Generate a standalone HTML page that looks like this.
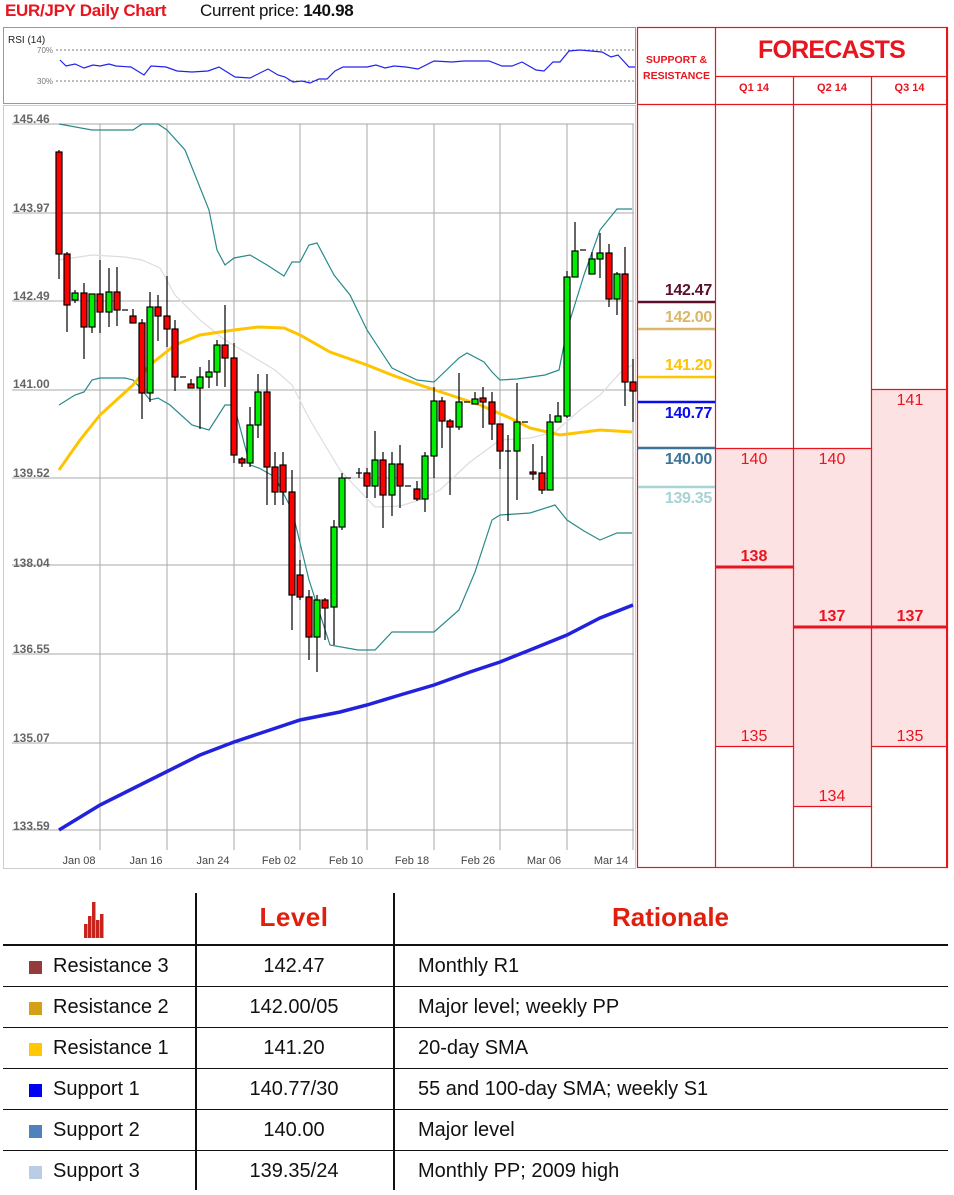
<!DOCTYPE html>
<html><head><meta charset="utf-8"><style>
*{margin:0;padding:0;box-sizing:border-box}
body{width:954px;height:1195px;background:#fff;position:relative;overflow:hidden;font-family:"Liberation Sans",sans-serif}
.a{position:absolute}
.hd{font-size:17px}
.sr{position:absolute;right:242px;font-size:16px;font-weight:bold;text-align:right;letter-spacing:-0.3px}
.fc{position:absolute;font-size:16px;color:#e8141e;text-align:center;width:78px}
.row{position:absolute;left:3px;width:945px;height:41px;border-bottom:1.5px solid #111;font-size:20px;color:#111}
.row span{position:absolute;top:9px}
.sw{position:absolute;left:26px;top:15px;width:13px;height:13px}
</style></head><body>
<div class="a hd" style="left:5px;top:1px;color:#e8141e;font-weight:bold;letter-spacing:-0.3px">EUR/JPY Daily Chart</div>
<div class="a hd" style="left:200px;top:1px;color:#111;letter-spacing:-0.3px">Current price: <b>140.98</b></div>

<svg class="a" style="left:0;top:0" width="954" height="870">
<rect x="3.5" y="27.5" width="632" height="76" fill="#fff" stroke="#999"/>
<text x="8" y="43" font-size="10" fill="#222" font-family="Liberation Sans">RSI (14)</text>
<text x="37" y="53" font-size="8" fill="#777" font-family="Liberation Sans">70%</text>
<text x="37" y="84" font-size="8" fill="#777" font-family="Liberation Sans">30%</text>
<line x1="56" y1="50" x2="635" y2="50" stroke="#777" stroke-dasharray="2,2"/>
<line x1="56" y1="81" x2="635" y2="81" stroke="#777" stroke-dasharray="2,2"/>
<polyline fill="none" stroke="#2222ee" stroke-width="1.2" points="60,60 66,66 75,64 84,68 93,65 100,66 109,64 116,66 131,67 144,75 151,66 166,67 177,71 192,72 208,71 219,67 235,77 250,78 268,69 278,75 285,77 293,82 302,81 310,83 319,79 327,79 335,71 343,67 367,67 376,65 385,68 394,66 406,67 418,69 434,61 452,62 464,61 489,61 502,66 512,66 522,62 536,70 544,71 553,62 560,62 569,51 580,50 602,52 611,57 618,55 629,67 635,67"/>
<rect x="3.5" y="105.5" width="632" height="763" fill="#fff" stroke="#ccc"/>
<g stroke="#aaa" stroke-width="1">
<line x1="12" y1="124" x2="634" y2="124"/><line x1="12" y1="213" x2="634" y2="213"/><line x1="12" y1="301" x2="634" y2="301"/><line x1="12" y1="390" x2="634" y2="390"/><line x1="12" y1="478" x2="634" y2="478"/><line x1="12" y1="565" x2="634" y2="565"/><line x1="12" y1="654" x2="634" y2="654"/><line x1="12" y1="743" x2="634" y2="743"/><line x1="12" y1="830" x2="634" y2="830"/>
<line x1="100" y1="124" x2="100" y2="850"/><line x1="167" y1="124" x2="167" y2="850"/><line x1="234" y1="124" x2="234" y2="850"/><line x1="300" y1="124" x2="300" y2="850"/><line x1="367" y1="124" x2="367" y2="850"/><line x1="434" y1="124" x2="434" y2="850"/><line x1="500" y1="124" x2="500" y2="850"/><line x1="567" y1="124" x2="567" y2="850"/><line x1="633" y1="124" x2="633" y2="850"/>
</g>
<g font-size="12" fill="#666" font-family="Liberation Sans" font-weight="bold">
<text x="13" y="123">145.46</text><text x="13" y="212">143.97</text><text x="13" y="300">142.49</text><text x="13" y="388">141.00</text><text x="13" y="477">139.52</text><text x="13" y="567">138.04</text><text x="13" y="653">136.55</text><text x="13" y="742">135.07</text><text x="13" y="830">133.59</text>
</g>
<g font-size="11" fill="#444" font-family="Liberation Sans" text-anchor="middle">
<text x="79" y="864">Jan 08</text><text x="146" y="864">Jan 16</text><text x="213" y="864">Jan 24</text><text x="279" y="864">Feb 02</text><text x="346" y="864">Feb 10</text><text x="412" y="864">Feb 18</text><text x="478" y="864">Feb 26</text><text x="544" y="864">Mar 06</text><text x="611" y="864">Mar 14</text>
</g>
<polyline fill="none" stroke="#ddd" stroke-width="1.2" points="59,260 92,255 125,257 142,260 160,268 175,295 200,320 225,340 250,355 275,370 292,385 310,420 340,470 355,486 375,507 400,506 420,500 440,490 470,462 500,440 530,438 555,432 580,410 600,395 620,373 632,365"/>
<polyline fill="none" stroke="#2a8a8a" stroke-width="1.2" points="59,124 92,130 133,130 142,124 158,124 167,130 185,150 209,210 217,250 225,265 234,258 250,255 267,265 284,276 292,262 300,262 309,245 317,243 334,275 350,295 367,330 392,368 417,380 434,382 459,358 467,353 484,362 492,372 500,380 517,379 545,375 559,370 567,330 584,275 600,230 617,209 632,209"/>
<polyline fill="none" stroke="#2a8a8a" stroke-width="1.2" points="59,405 75,395 84,392 92,380 100,378 125,378 133,380 142,390 150,400 158,398 170,405 192,425 209,430 225,405 234,405 250,465 259,468 275,477 292,510 309,580 330,645 358,650 375,650 392,632 434,632 459,610 475,572 492,520 500,515 530,513 555,505 567,520 584,531 600,540 617,533 632,533"/>
<polyline fill="none" stroke="#ffc400" stroke-width="3" points="59,470 80,440 100,415 133,385 150,365 175,345 200,335 234,330 258,327 284,328 300,335 330,352 367,365 392,375 420,385 450,395 480,405 510,418 530,428 560,435 600,430 632,432"/>
<polyline fill="none" stroke="#2222dd" stroke-width="3.5" points="59,830 100,805 150,780 200,755 234,742 270,730 300,720 340,712 367,705 400,695 434,685 470,672 500,662 530,650 567,635 600,618 633,605"/>
<g stroke="#000" stroke-width="1.2">
<line x1="59" y1="150" x2="59" y2="279"/><rect x="56" y="152" width="6" height="102" fill="#f00"/>
<line x1="67" y1="252" x2="67" y2="332"/><rect x="64" y="254" width="6" height="51" fill="#f00"/>
<line x1="75" y1="290" x2="75" y2="303"/><rect x="72" y="293" width="6" height="7" fill="#0e0"/>
<line x1="84" y1="283" x2="84" y2="359"/><rect x="81" y="293" width="6" height="34" fill="#f00"/>
<line x1="92" y1="294" x2="92" y2="333"/><rect x="89" y="294" width="6" height="33" fill="#0e0"/>
<line x1="100" y1="260" x2="100" y2="333"/><rect x="97" y="294" width="6" height="18" fill="#f00"/>
<line x1="109" y1="268" x2="109" y2="327"/><rect x="106" y="292" width="6" height="20" fill="#0e0"/>
<line x1="117" y1="267" x2="117" y2="326"/><rect x="114" y="292" width="6" height="18" fill="#f00"/>
<line x1="122" y1="310" x2="128" y2="310"/>
<line x1="133" y1="309" x2="133" y2="323"/><rect x="130" y="316" width="6" height="7" fill="#f00"/>
<line x1="142" y1="319" x2="142" y2="419"/><rect x="139" y="323" width="6" height="70" fill="#f00"/>
<line x1="150" y1="292" x2="150" y2="402"/><rect x="147" y="307" width="6" height="86" fill="#0e0"/>
<line x1="158" y1="295" x2="158" y2="341"/><rect x="155" y="307" width="6" height="9" fill="#f00"/>
<line x1="167" y1="276" x2="167" y2="347"/><rect x="164" y="316" width="6" height="13" fill="#f00"/>
<line x1="175" y1="320" x2="175" y2="391"/><rect x="172" y="329" width="6" height="48" fill="#f00"/>
<line x1="180" y1="377" x2="186" y2="377"/>
<line x1="191" y1="379" x2="191" y2="388"/><rect x="188" y="384" width="6" height="4" fill="#f00"/>
<line x1="200" y1="367" x2="200" y2="429"/><rect x="197" y="377" width="6" height="11" fill="#0e0"/>
<line x1="209" y1="360" x2="209" y2="388"/><rect x="206" y="372" width="6" height="5" fill="#0e0"/>
<line x1="217" y1="340" x2="217" y2="386"/><rect x="214" y="345" width="6" height="27" fill="#0e0"/>
<line x1="225" y1="305" x2="225" y2="387"/><rect x="222" y="345" width="6" height="13" fill="#f00"/>
<line x1="234" y1="343" x2="234" y2="463"/><rect x="231" y="358" width="6" height="97" fill="#f00"/>
<line x1="242" y1="457" x2="242" y2="467"/><rect x="239" y="459" width="6" height="4" fill="#f00"/>
<line x1="250" y1="407" x2="250" y2="467"/><rect x="247" y="425" width="6" height="38" fill="#0e0"/>
<line x1="258" y1="374" x2="258" y2="438"/><rect x="255" y="392" width="6" height="33" fill="#0e0"/>
<line x1="267" y1="374" x2="267" y2="505"/><rect x="264" y="392" width="6" height="75" fill="#f00"/>
<line x1="275" y1="452" x2="275" y2="505"/><rect x="272" y="467" width="6" height="25" fill="#f00"/>
<line x1="283" y1="452" x2="283" y2="505"/><rect x="280" y="465" width="6" height="27" fill="#f00"/>
<line x1="292" y1="470" x2="292" y2="630"/><rect x="289" y="492" width="6" height="103" fill="#f00"/>
<line x1="300" y1="560" x2="300" y2="600"/><rect x="297" y="575" width="6" height="22" fill="#f00"/>
<line x1="309" y1="590" x2="309" y2="660"/><rect x="306" y="597" width="6" height="40" fill="#f00"/>
<line x1="317" y1="595" x2="317" y2="672"/><rect x="314" y="600" width="6" height="37" fill="#0e0"/>
<line x1="325" y1="598" x2="325" y2="640"/><rect x="322" y="600" width="6" height="8" fill="#f00"/>
<line x1="334" y1="520" x2="334" y2="645"/><rect x="331" y="527" width="6" height="80" fill="#0e0"/>
<line x1="342" y1="473" x2="342" y2="530"/><rect x="339" y="478" width="6" height="49" fill="#0e0"/>
<line x1="345" y1="478" x2="351" y2="478"/>
<line x1="356" y1="473" x2="362" y2="473"/><line x1="359" y1="468" x2="359" y2="478"/>
<line x1="367" y1="468" x2="367" y2="498"/><rect x="364" y="473" width="6" height="13" fill="#f00"/>
<line x1="375" y1="431" x2="375" y2="498"/><rect x="372" y="460" width="6" height="26" fill="#0e0"/>
<line x1="383" y1="452" x2="383" y2="528"/><rect x="380" y="460" width="6" height="35" fill="#f00"/>
<line x1="392" y1="452" x2="392" y2="516"/><rect x="389" y="464" width="6" height="31" fill="#0e0"/>
<line x1="400" y1="445" x2="400" y2="508"/><rect x="397" y="464" width="6" height="22" fill="#f00"/>
<line x1="405" y1="486" x2="411" y2="486"/>
<line x1="417" y1="481" x2="417" y2="501"/><rect x="414" y="489" width="6" height="10" fill="#f00"/>
<line x1="425" y1="452" x2="425" y2="512"/><rect x="422" y="456" width="6" height="43" fill="#0e0"/>
<line x1="434" y1="387" x2="434" y2="478"/><rect x="431" y="401" width="6" height="55" fill="#0e0"/>
<line x1="442" y1="397" x2="442" y2="448"/><rect x="439" y="401" width="6" height="20" fill="#f00"/>
<line x1="450" y1="419" x2="450" y2="495"/><rect x="447" y="421" width="6" height="6" fill="#f00"/>
<line x1="459" y1="373" x2="459" y2="430"/><rect x="456" y="402" width="6" height="25" fill="#0e0"/>
<line x1="464" y1="402" x2="470" y2="402"/>
<line x1="475" y1="392" x2="475" y2="404"/><rect x="472" y="399" width="6" height="5" fill="#0e0"/>
<line x1="483" y1="387" x2="483" y2="428"/><rect x="480" y="398" width="6" height="4" fill="#f00"/>
<line x1="492" y1="392" x2="492" y2="440"/><rect x="489" y="402" width="6" height="22" fill="#f00"/>
<line x1="500" y1="424" x2="500" y2="469"/><rect x="497" y="424" width="6" height="27" fill="#f00"/>
<line x1="505" y1="451" x2="511" y2="451"/><line x1="508" y1="435" x2="508" y2="521"/>
<line x1="517" y1="383" x2="517" y2="500"/><rect x="514" y="422" width="6" height="29" fill="#0e0"/>
<line x1="522" y1="422" x2="528" y2="422"/>
<line x1="533" y1="444" x2="533" y2="480"/><rect x="530" y="472" width="6" height="2" fill="#f00"/>
<line x1="542" y1="456" x2="542" y2="494"/><rect x="539" y="473" width="6" height="17" fill="#f00"/>
<line x1="550" y1="414" x2="550" y2="490"/><rect x="547" y="422" width="6" height="68" fill="#0e0"/>
<line x1="558" y1="402" x2="558" y2="422"/><rect x="555" y="416" width="6" height="6" fill="#0e0"/>
<line x1="567" y1="271" x2="567" y2="418"/><rect x="564" y="277" width="6" height="139" fill="#0e0"/>
<line x1="575" y1="222" x2="575" y2="277"/><rect x="572" y="251" width="6" height="26" fill="#0e0"/>
<line x1="580" y1="250" x2="586" y2="250"/>
<line x1="592" y1="252" x2="592" y2="274"/><rect x="589" y="259" width="6" height="15" fill="#0e0"/>
<line x1="600" y1="233" x2="600" y2="278"/><rect x="597" y="253" width="6" height="6" fill="#0e0"/>
<line x1="609" y1="244" x2="609" y2="307"/><rect x="606" y="253" width="6" height="46" fill="#f00"/>
<line x1="617" y1="272" x2="617" y2="315"/><rect x="614" y="274" width="6" height="25" fill="#0e0"/>
<line x1="625" y1="247" x2="625" y2="406"/><rect x="622" y="274" width="6" height="108" fill="#f00"/>
<line x1="633" y1="359" x2="633" y2="422"/><rect x="630" y="382" width="6" height="9" fill="#f00"/>
</g>
<rect x="715" y="448" width="78" height="298" fill="#fde2e4"/>
<rect x="793" y="448" width="78" height="358" fill="#fde2e4"/>
<rect x="871" y="389" width="77" height="357" fill="#fde2e4"/>
<g stroke="#e8141e" stroke-width="1.2" fill="none">
<rect x="637.5" y="27.5" width="310" height="840"/>
<line x1="715.5" y1="27" x2="715.5" y2="868"/>
<line x1="793.5" y1="76" x2="793.5" y2="868"/>
<line x1="871.5" y1="76" x2="871.5" y2="868"/>
<line x1="715" y1="76.5" x2="948" y2="76.5"/>
<line x1="637" y1="104.5" x2="948" y2="104.5"/>
<line x1="715" y1="448.5" x2="871" y2="448.5"/>
<line x1="715" y1="746.5" x2="793" y2="746.5"/>
<line x1="793" y1="806.5" x2="871" y2="806.5"/>
<line x1="871" y1="389.5" x2="948" y2="389.5"/>
<line x1="871" y1="746.5" x2="948" y2="746.5"/>
</g>
<line x1="947" y1="27" x2="947" y2="868" stroke="#e8141e" stroke-width="2"/>
<line x1="715" y1="567" x2="793" y2="567" stroke="#e8141e" stroke-width="3"/>
<line x1="793" y1="627" x2="948" y2="627" stroke="#e8141e" stroke-width="3"/>
<line x1="638" y1="302" x2="715" y2="302" stroke="#5a0f2e" stroke-width="2.5"/>
<line x1="638" y1="329" x2="715" y2="329" stroke="#dbb668" stroke-width="2.5"/>
<line x1="638" y1="377" x2="715" y2="377" stroke="#ffc400" stroke-width="2.5"/>
<line x1="638" y1="402" x2="715" y2="402" stroke="#0a0af0" stroke-width="2.5"/>
<line x1="638" y1="448" x2="715" y2="448" stroke="#3c7396" stroke-width="2.5"/>
<line x1="638" y1="487" x2="715" y2="487" stroke="#a8d2d4" stroke-width="2.5"/>
</svg>
<div class="a" style="left:638px;top:52px;width:77px;text-align:center;font-size:10.5px;font-weight:bold;color:#e8141e;line-height:16px">SUPPORT &amp;<br>RESISTANCE</div>
<div class="a" style="left:715px;top:36px;width:233px;text-align:center;font-size:25px;font-weight:bold;color:#e8141e;letter-spacing:-0.8px">FORECASTS</div>
<div class="a" style="left:715px;top:82px;width:78px;text-align:center;font-size:11px;font-weight:bold;color:#e8141e">Q1 14</div>
<div class="a" style="left:793px;top:82px;width:78px;text-align:center;font-size:11px;font-weight:bold;color:#e8141e">Q2 14</div>
<div class="a" style="left:871px;top:82px;width:77px;text-align:center;font-size:11px;font-weight:bold;color:#e8141e">Q3 14</div>
<div class="sr" style="top:282px;color:#5a0f2e">142.47</div>
<div class="sr" style="top:309px;color:#dbb668">142.00</div>
<div class="sr" style="top:357px;color:#ffc400">141.20</div>
<div class="sr" style="top:405px;color:#0a0af0">140.77</div>
<div class="sr" style="top:451px;color:#3c7396">140.00</div>
<div class="sr" style="top:490px;color:#a8d2d4">139.35</div>
<div class="fc" style="left:715px;top:451px">140</div>
<div class="fc" style="left:793px;top:451px">140</div>
<div class="fc" style="left:871px;top:392px">141</div>
<div class="fc" style="left:715px;top:548px;font-weight:bold">138</div>
<div class="fc" style="left:793px;top:608px;font-weight:bold">137</div>
<div class="fc" style="left:871px;top:608px;font-weight:bold">137</div>
<div class="fc" style="left:715px;top:728px">135</div>
<div class="fc" style="left:793px;top:788px">134</div>
<div class="fc" style="left:871px;top:728px">135</div>

<div class="a" style="left:195px;top:893px;width:1.5px;height:297px;background:#111"></div>
<div class="a" style="left:393px;top:893px;width:1.5px;height:297px;background:#111"></div>
<svg class="a" style="left:84px;top:902px" width="20" height="36"><g fill="#c8241e"><rect x="0" y="22" width="3.5" height="14"/><rect x="4" y="14" width="3.5" height="22"/><rect x="8" y="0" width="3.5" height="36"/><rect x="12" y="18" width="3.5" height="18"/><rect x="16" y="12" width="3.5" height="24"/></g></svg>
<div class="a" style="left:195px;top:902px;width:198px;text-align:center;font-size:26px;font-weight:900;color:#e0200f;letter-spacing:0.5px">Level</div>
<div class="a" style="left:393px;top:902px;width:555px;text-align:center;font-size:26px;font-weight:900;color:#e0200f">Rationale</div>
<div class="a" style="left:3px;top:944px;width:945px;height:2px;background:#111"></div>
<div class="row" style="top:946px"><div class="sw" style="background:#943b3b"></div><span style="left:50px">Resistance 3</span><span style="left:192px;width:198px;text-align:center">142.47</span><span style="left:415px">Monthly R1</span></div>
<div class="row" style="top:987px"><div class="sw" style="background:#d4a017"></div><span style="left:50px">Resistance 2</span><span style="left:192px;width:198px;text-align:center">142.00/05</span><span style="left:415px">Major level; weekly PP</span></div>
<div class="row" style="top:1028px"><div class="sw" style="background:#ffc800"></div><span style="left:50px">Resistance 1</span><span style="left:192px;width:198px;text-align:center">141.20</span><span style="left:415px">20-day SMA</span></div>
<div class="row" style="top:1069px"><div class="sw" style="background:#0000f0"></div><span style="left:50px">Support 1</span><span style="left:192px;width:198px;text-align:center">140.77/30</span><span style="left:415px">55 and 100-day SMA; weekly S1</span></div>
<div class="row" style="top:1110px"><div class="sw" style="background:#4f81bd"></div><span style="left:50px">Support 2</span><span style="left:192px;width:198px;text-align:center">140.00</span><span style="left:415px">Major level</span></div>
<div class="row" style="top:1151px;border-bottom:none"><div class="sw" style="background:#b9cde5"></div><span style="left:50px">Support 3</span><span style="left:192px;width:198px;text-align:center">139.35/24</span><span style="left:415px">Monthly PP; 2009 high</span></div>
</body></html>
